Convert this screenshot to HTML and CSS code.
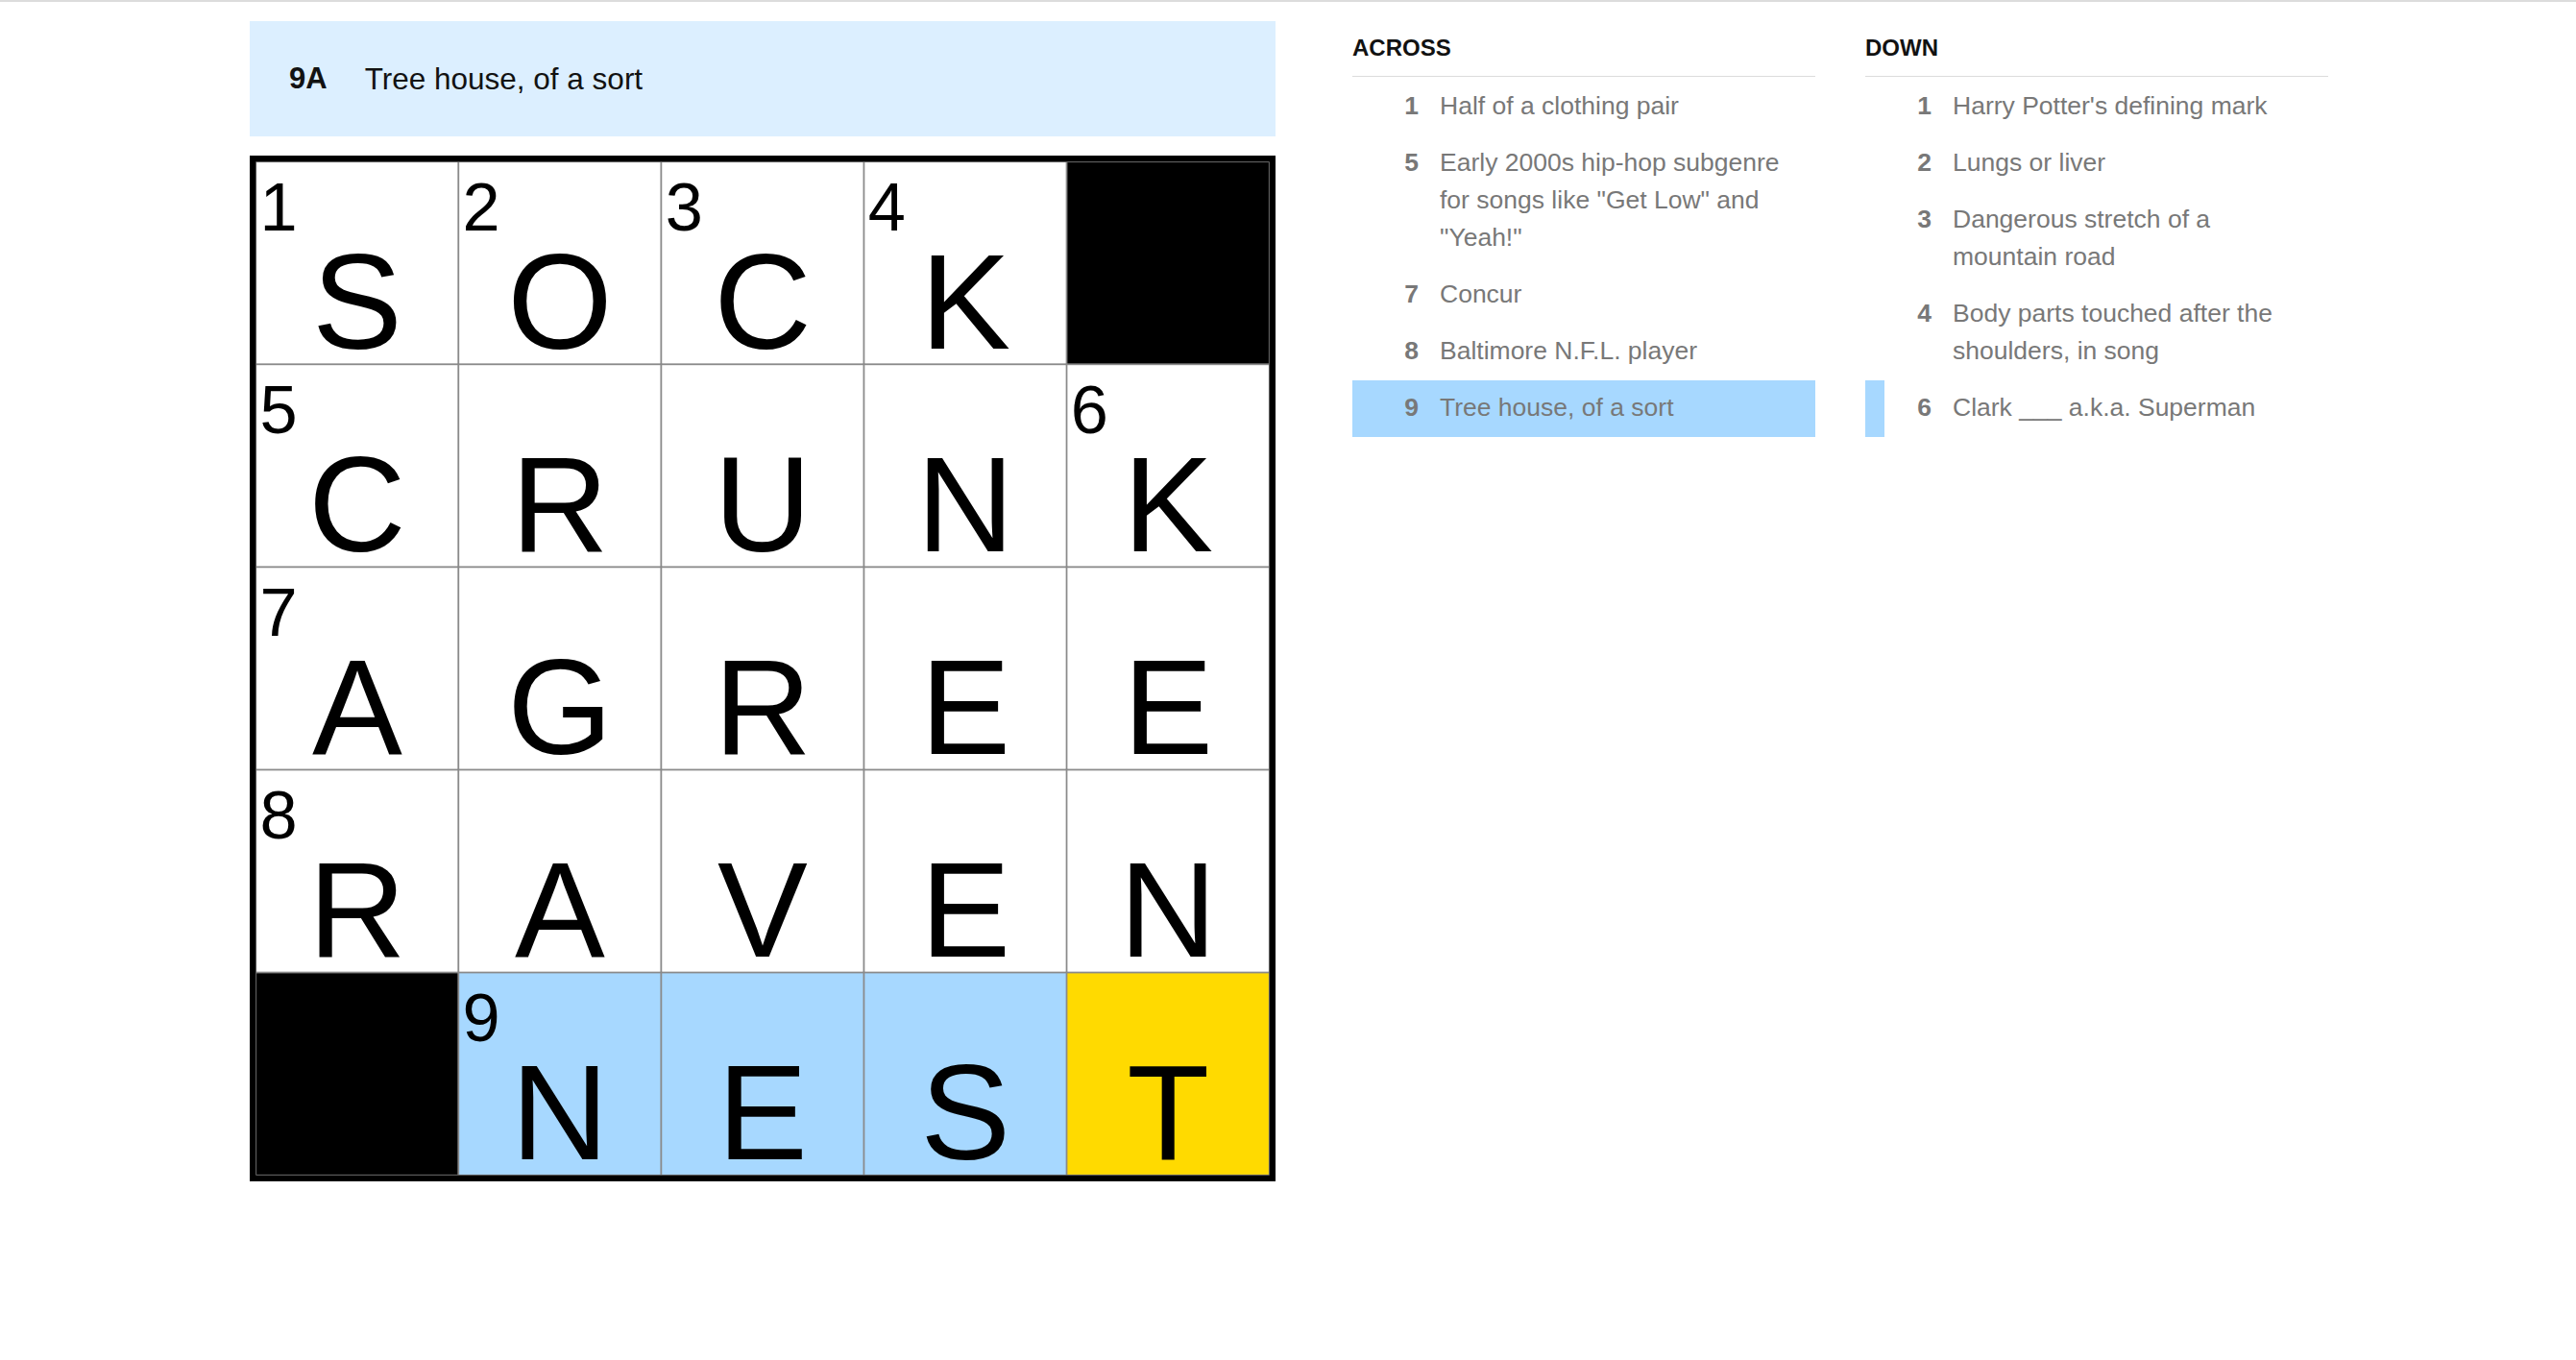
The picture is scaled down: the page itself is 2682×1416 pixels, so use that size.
FILE: index.html
```html
<!DOCTYPE html>
<html lang="en">
<head>
  <meta charset="UTF-8" />
  <meta name="viewport" content="width=device-width, initial-scale=1.0"/>
  <title>The Mini Crossword</title>
  <link rel="stylesheet" href="styles.css">
</head>
<body>

  <main class="puzzle">

    <!-- Board: current clue + grid -->
    <section class="board">
      <div class="clue-bar">
        <span class="clue-bar-label">9A</span>
        <span class="clue-bar-text">Tree house, of a sort</span>
      </div>

      <svg class="grid" viewBox="0 0 506 506">
        <!-- row 1 -->
        <rect class="cell" x="3" y="3" width="100" height="100"/>
        <rect class="cell" x="103" y="3" width="100" height="100"/>
        <rect class="cell" x="203" y="3" width="100" height="100"/>
        <rect class="cell" x="303" y="3" width="100" height="100"/>
        <rect class="cell block" x="403" y="3" width="100" height="100"/>
        <!-- row 2 -->
        <rect class="cell" x="3" y="103" width="100" height="100"/>
        <rect class="cell" x="103" y="103" width="100" height="100"/>
        <rect class="cell" x="203" y="103" width="100" height="100"/>
        <rect class="cell" x="303" y="103" width="100" height="100"/>
        <rect class="cell" x="403" y="103" width="100" height="100"/>
        <!-- row 3 -->
        <rect class="cell" x="3" y="203" width="100" height="100"/>
        <rect class="cell" x="103" y="203" width="100" height="100"/>
        <rect class="cell" x="203" y="203" width="100" height="100"/>
        <rect class="cell" x="303" y="203" width="100" height="100"/>
        <rect class="cell" x="403" y="203" width="100" height="100"/>
        <!-- row 4 -->
        <rect class="cell" x="3" y="303" width="100" height="100"/>
        <rect class="cell" x="103" y="303" width="100" height="100"/>
        <rect class="cell" x="203" y="303" width="100" height="100"/>
        <rect class="cell" x="303" y="303" width="100" height="100"/>
        <rect class="cell" x="403" y="303" width="100" height="100"/>
        <!-- row 5 -->
        <rect class="cell block" x="3" y="403" width="100" height="100"/>
        <rect class="cell word" x="103" y="403" width="100" height="100"/>
        <rect class="cell word" x="203" y="403" width="100" height="100"/>
        <rect class="cell word" x="303" y="403" width="100" height="100"/>
        <rect class="cell selected" x="403" y="403" width="100" height="100"/>

        <rect class="grid-border" x="1.5" y="1.5" width="503" height="503"/>

        <!-- clue numbers -->
        <text class="cell-num" x="5" y="37">1</text>
        <text class="cell-num" x="105" y="37">2</text>
        <text class="cell-num" x="205" y="37">3</text>
        <text class="cell-num" x="305" y="37">4</text>
        <text class="cell-num" x="5" y="137">5</text>
        <text class="cell-num" x="405" y="137">6</text>
        <text class="cell-num" x="5" y="237">7</text>
        <text class="cell-num" x="5" y="337">8</text>
        <text class="cell-num" x="105" y="437">9</text>

        <!-- answers -->
        <text class="cell-letter" x="53" y="95">S</text>
        <text class="cell-letter" x="153" y="95">O</text>
        <text class="cell-letter" x="253" y="95">C</text>
        <text class="cell-letter" x="353" y="95">K</text>

        <text class="cell-letter" x="53" y="195">C</text>
        <text class="cell-letter" x="153" y="195">R</text>
        <text class="cell-letter" x="253" y="195">U</text>
        <text class="cell-letter" x="353" y="195">N</text>
        <text class="cell-letter" x="453" y="195">K</text>

        <text class="cell-letter" x="53" y="295">A</text>
        <text class="cell-letter" x="153" y="295">G</text>
        <text class="cell-letter" x="253" y="295">R</text>
        <text class="cell-letter" x="353" y="295">E</text>
        <text class="cell-letter" x="453" y="295">E</text>

        <text class="cell-letter" x="53" y="395">R</text>
        <text class="cell-letter" x="153" y="395">A</text>
        <text class="cell-letter" x="253" y="395">V</text>
        <text class="cell-letter" x="353" y="395">E</text>
        <text class="cell-letter" x="453" y="395">N</text>

        <text class="cell-letter" x="153" y="495">N</text>
        <text class="cell-letter" x="253" y="495">E</text>
        <text class="cell-letter" x="353" y="495">S</text>
        <text class="cell-letter" x="453" y="495">T</text>
      </svg>
    </section>

    <!-- Clue lists -->
    <section class="clue-lists">
      <div class="clue-list">
        <h3>Across</h3>
        <ol>
          <li><span class="clue-num">1</span><span class="clue-text">Half of a clothing pair</span></li>
          <li><span class="clue-num">5</span><span class="clue-text">Early 2000s hip-hop subgenre for songs like "Get Low" and "Yeah!"</span></li>
          <li><span class="clue-num">7</span><span class="clue-text">Concur</span></li>
          <li><span class="clue-num">8</span><span class="clue-text">Baltimore N.F.L. player</span></li>
          <li class="active"><span class="clue-num">9</span><span class="clue-text">Tree house, of a sort</span></li>
        </ol>
      </div>

      <div class="clue-list">
        <h3>Down</h3>
        <ol>
          <li><span class="clue-num">1</span><span class="clue-text">Harry Potter's defining mark</span></li>
          <li><span class="clue-num">2</span><span class="clue-text">Lungs or liver</span></li>
          <li><span class="clue-num">3</span><span class="clue-text">Dangerous stretch of a mountain road</span></li>
          <li><span class="clue-num">4</span><span class="clue-text">Body parts touched after the shoulders, in song</span></li>
          <li class="crossing"><span class="clue-num">6</span><span class="clue-text">Clark ___ a.k.a. Superman</span></li>
        </ol>
      </div>
    </section>

  </main>

</body>
</html>
```

FILE: styles.css
```css
body {
  font-family: 'Liberation Sans', Arial, sans-serif;
  background: #fff;
  color: #121212;
  margin: 0;
  padding: 0;
  border-top: 2px solid #dcdcdc;
}

.puzzle {
  display: flex;
  justify-content: center;
  gap: 80px;
  padding: 20px 0 0 2px;
}

/* Board */

.board {
  width: 1068px;
  display: flex;
  flex-direction: column;
  gap: 20px;
}

.clue-bar {
  height: 120px;
  background: #dcefff;
  display: flex;
  align-items: center;
  padding-left: 41px;
  font-size: 31.5px;
  color: #121212;
}

.clue-bar-label {
  font-weight: bold;
  font-size: 31px;
  margin-right: 39px;
}

.grid {
  display: block;
  width: 1068px;
  height: 1068px;
  overflow: visible;
}

.cell {
  fill: #fff;
  stroke: #8a8a8a;
  stroke-width: 0.75;
}

.cell.block {
  fill: #000;
}

.cell.word {
  fill: #a7d8ff;
}

.cell.selected {
  fill: #ffda00;
}

.grid-border {
  fill: none;
  stroke: #000;
  stroke-width: 3;
}

.cell-num {
  font-family: 'Liberation Sans', Arial, sans-serif;
  font-size: 33.33px;
  fill: #000;
}

.cell-letter {
  font-family: 'Liberation Sans', Arial, sans-serif;
  font-size: 66.67px;
  text-anchor: middle;
  fill: #000;
}

/* Clue lists */

.clue-lists {
  display: flex;
  gap: 52px;
}

.clue-list {
  width: 482px;
}

.clue-list h3 {
  margin: 0;
  padding: 13px 0 14px;
  font-size: 24px;
  line-height: 30px;
  font-weight: bold;
  text-transform: uppercase;
  color: #121212;
  border-bottom: 1px solid #dcdcdc;
}

.clue-list ol {
  list-style: none;
  margin: 2px 0 0;
  padding: 0;
}

.clue-list li {
  display: flex;
  border-left: 20px solid transparent;
  padding: 9px 30px 11px 0;
  font-size: 26.5px;
  line-height: 39px;
  color: #787878;
}

.clue-num {
  flex-shrink: 0;
  width: 49px;
  margin-right: 22px;
  text-align: right;
  font-weight: bold;
}

.clue-list li.active {
  background: #a7d8ff;
}

.clue-list li.crossing {
  border-left-color: #a7d8ff;
}
```
